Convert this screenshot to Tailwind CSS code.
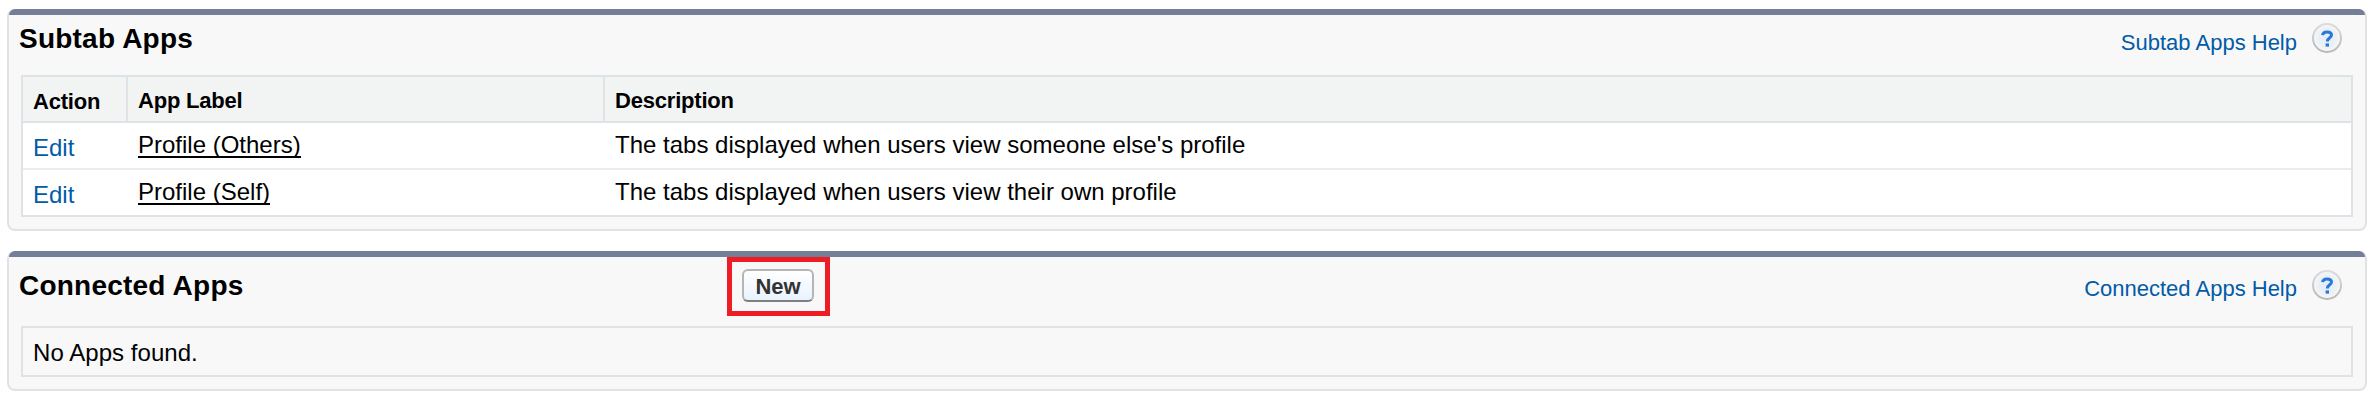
<!DOCTYPE html>
<html lang="en">
<head>
<meta charset="utf-8">
<title>Apps</title>
<script src="https://cdn.jsdelivr.net/npm/@tailwindcss/browser@4"></script>
</head>
<body class="bg-white font-['Liberation_Sans',Arial,sans-serif] text-black text-[24px] leading-[27px]">
<main class="pt-[9px] pl-[7px] w-[2367px] flex flex-col gap-5">
  <section class="h-[222px] border-x-2 border-b-2 border-[#dfe3e6] rounded-[8px] bg-[#f8f8f8]">
    <div class="h-[6px] bg-[#747e96] rounded-t-[6px]"></div>
    <header class="h-[60px] pl-[10px] pr-[23px] flex items-start">
      <h2 class="mt-[8px] text-[28px] leading-[31px] font-bold tracking-[0.22px]">Subtab Apps</h2>
      <a class="ml-auto mt-[15px] text-[22px] leading-[25px] text-[#015ba7]">Subtab Apps Help</a>
      <svg class="mt-[8px] ml-[15px] w-[30px] h-[30px]" viewBox="0 0 30 30">
        <defs>
          <linearGradient id="ring" x1="0" y1="0" x2="0" y2="1"><stop offset="0" stop-color="#dcdcdc"/><stop offset="1" stop-color="#b8b8b8"/></linearGradient>
          <radialGradient id="face"><stop offset="0" stop-color="#e2ecf8"/><stop offset=".6" stop-color="#ebf0f6"/><stop offset="1" stop-color="#f7f7f7"/></radialGradient>
          <g id="help">
            <circle cx="15" cy="15" r="14" fill="url(#face)" stroke="url(#ring)" stroke-width="2"/>
            <path d="M10.600 12.200C10.800 9.800 12.400 8.900 15 8.900c2.800 0 4.500 1.100 4.500 3.100 0 2.900-4.100 2.700-4.100 6.400" fill="none" stroke="#2a78d6" stroke-width="3"/>
            <rect x="13.600" y="20.400" width="3.400" height="3.200" fill="#2a78d6"/>
          </g>
        </defs>
        <use href="#help"/>
      </svg>
    </header>
    <div class="mx-[12px] h-[142px] border-2 border-[#dfe2e6] bg-white">
      <div class="h-[46px] flex border-b-2 border-[#dfe2e6] bg-[#f2f3f3] text-[22px] leading-[25px] font-bold tracking-[-0.2px]">
        <div class="w-[105px] border-r-2 border-[#dfe2e6] pl-[10px] pt-[12px]">Action</div>
        <div class="w-[477px] border-r-2 border-[#dfe2e6] pl-[10px] pt-[11px]">App Label</div>
        <div class="pl-[10px] pt-[11px]">Description</div>
      </div>
      <div class="h-[47px] flex border-b-2 border-[#ececec]">
        <div class="w-[105px] pl-[10px] pt-[11px] text-[#015ba7]">Edit</div>
        <div class="w-[477px] pl-[10px] pt-[8px]"><a class="inline-block h-[27px] border-b-2 border-black">Profile (Others)</a></div>
        <div class="pl-[10px] pt-[8px]">The tabs displayed when users view someone else's profile</div>
      </div>
      <div class="h-[45px] flex">
        <div class="w-[105px] pl-[10px] pt-[11px] text-[#015ba7]">Edit</div>
        <div class="w-[477px] pl-[10px] pt-[8px]"><a class="inline-block h-[27px] border-b-2 border-black">Profile (Self)</a></div>
        <div class="pl-[10px] pt-[8px]">The tabs displayed when users view their own profile</div>
      </div>
    </div>
  </section>
  <section class="h-[140px] border-x-2 border-b-2 border-[#dfe3e6] rounded-[8px] bg-[#f8f8f8]">
    <div class="h-[6px] bg-[#747e96] rounded-t-[6px]"></div>
    <header class="h-[69px] pl-[10px] pr-[23px] flex items-start">
      <h2 class="w-[708px] mt-[13px] text-[28px] leading-[31px] font-bold tracking-[0.22px]">Connected Apps</h2>
      <div class="w-[103px] h-[59px] border-5 border-[#ee1c25] pt-[7px] pl-[10px]">
        <button class="block w-[72px] h-[33px] rounded-[6px] border-2 border-[#b5b5b5] border-b-[#7f7f7f] bg-linear-to-b from-white to-[#e8f3fe] text-[22px] leading-[25px] font-bold text-[#333333] pt-px">New</button>
      </div>
      <a class="ml-auto mt-[19px] text-[22px] leading-[25px] text-[#015ba7]">Connected Apps Help</a>
      <svg class="mt-[13px] ml-[15px] w-[30px] h-[30px]" viewBox="0 0 30 30"><use href="#help"/></svg>
    </header>
    <div class="mx-[12px] h-[51px] border-2 border-[#dfe3e6] pl-[10px] pt-[11px] tracking-[0.05px]">No Apps found.</div>
  </section>
</main>
</body>
</html>
